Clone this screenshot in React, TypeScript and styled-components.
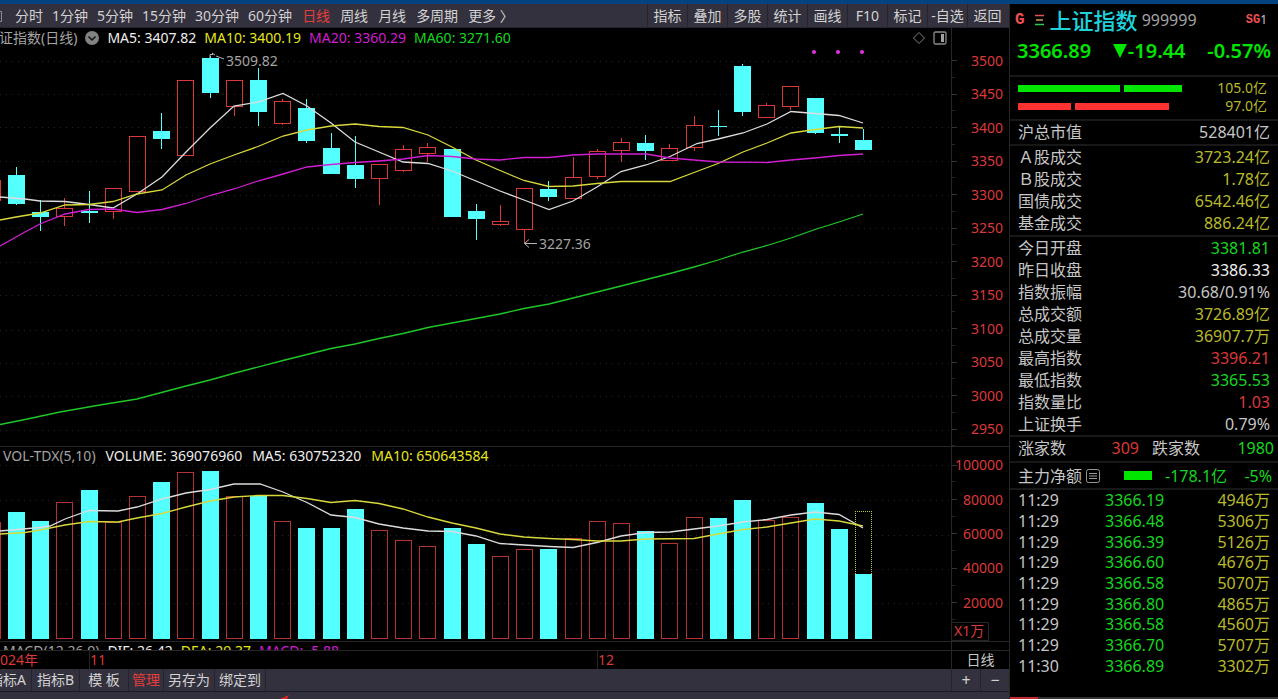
import React from "react";
import styled, { createGlobalStyle } from "styled-components";

const color = {
  text: "#c6c6c6",
  white: "#eeeeee",
  dim: "#a4a4a4",
  red: "#dc3838",
  green: "#14d71e",
  bright: "#00e600",
  yellow: "#b9b92a",
  lineYellow: "#e6e61e",
  magenta: "#d21ed2",
  cyan: "#54ffff",
  bar: "#33313d",
  barLine: "#25242e",
  rule: "#262626",
};

const GlobalStyle = createGlobalStyle`
  * { box-sizing: border-box; }
  body {
    margin: 0;
    background: #000;
    color: ${color.text};
    font: 14px/20px "Noto Sans", "Noto Sans CJK SC", sans-serif;
  }
  button { font: inherit; }
`;

const Page = styled.div`
  min-height: 100vh;
  border-top: 4px solid #04417f;
  display: grid;
  grid-template-columns: minmax(0, 1fr) 269px;
  background: #000;
  overflow: hidden;
`;

const Main = styled.main`
  display: flex;
  flex-direction: column;
  min-width: 0;
  overflow: hidden;
`;

const Toolbar = styled.nav`
  height: 24px;
  flex: none;
  display: flex;
  align-items: stretch;
  background: ${color.bar};
  border-bottom: 1px solid ${color.barLine};
  white-space: nowrap;
`;

const PeriodGroup = styled.div<{ $gap: number; $lead: number }>`
  display: flex;
  gap: ${(p) => p.$gap}px;
  padding-left: ${(p) => p.$lead}px;
`;

const FlatButton = styled.button<{ $color?: string }>`
  padding: 0;
  border: 0;
  background: none;
  color: ${(p) => p.$color ?? "#d2d2d2"};
  line-height: 24px;
  white-space: pre;
  cursor: pointer;
`;

const ToolGroup = styled.div`
  display: flex;
  margin-left: auto;
  padding-right: 2px;
`;

const ToolCell = styled(FlatButton)`
  width: 40px;
  border-left: 1px solid ${color.barLine};
`;

const LeftEdge = styled.svg`
  display: block;
  flex: none;
`;

const Panel = styled.section<{ $height: number }>`
  display: grid;
  grid-template-columns: minmax(0, 1fr) 58px;
  height: ${(p) => p.$height}px;
  border-bottom: 1px solid ${color.rule};
`;

const Plot = styled.div`
  display: flex;
  flex-direction: column;
  min-width: 0;
  overflow: hidden;
`;

const Legend = styled.header<{ $lead?: number; $height?: number; $gap?: number }>`
  height: ${(p) => p.$height ?? 18}px;
  flex: none;
  display: flex;
  align-items: center;
  gap: ${(p) => p.$gap ?? 8}px;
  margin-left: ${(p) => p.$lead ?? 3}px;
  white-space: nowrap;
`;

const Tint = styled.span<{ $color: string }>`
  color: ${(p) => p.$color};
`;

const LegendTools = styled.div`
  display: flex;
  gap: 7px;
  margin-left: auto;
  padding-right: 4px;
`;

const IconButton = styled.button`
  display: block;
  padding: 0;
  border: 0;
  background: none;
  line-height: 0;
  cursor: pointer;
`;

const Drawing = styled.svg`
  display: block;
  width: 100%;
  flex: none;
`;

const Axis = styled.aside`
  display: flex;
  flex-direction: column;
  border-left: 1px solid ${color.rule};
  color: ${color.red};
  overflow: hidden;
`;

const AxisLabels = styled.ol<{ $height: number; $top: number }>`
  list-style: none;
  margin: ${(p) => p.$top}px 0 0;
  padding: 0;
  height: ${(p) => p.$height}px;
  flex: none;
  display: grid;
  grid-auto-rows: 1fr;
  text-align: right;
`;

const AxisLabel = styled.li`
  display: flex;
  align-items: center;
  justify-content: flex-end;
  padding-right: 6px;
  background:
    linear-gradient(#333, #333) left center / 5px 1px no-repeat,
    linear-gradient(${color.rule}, ${color.rule}) left bottom / 3px 1px no-repeat;
`;

const Unit = styled.span`
  align-self: flex-start;
  width: 37px;
  height: 20px;
  margin-top: 2px;
  padding-left: 2px;
  border: 1px solid ${color.rule};
  border-left: 0;
  line-height: 16px;
`;

const MacdStrip = styled(Panel)`
  overflow: hidden;
`;

const DateRow = styled.div`
  display: grid;
  grid-template-columns: 89px 508px minmax(0, 1fr) 58px;
  height: 18px;
  line-height: 17px;
  color: ${color.red};
  overflow: hidden;
`;

const DateMark = styled.span<{ $first?: boolean }>`
  display: flex;
  justify-content: ${(p) => (p.$first ? "flex-end" : "flex-start")};
  padding-right: ${(p) => (p.$first ? 51 : 0)}px;
  border-left: ${(p) => (p.$first ? 0 : 1)}px solid ${color.rule};
  white-space: nowrap;
`;

const DateUnit = styled.span`
  border-left: 1px solid ${color.rule};
  color: ${color.text};
  text-align: center;
`;

const BottomBar = styled.nav`
  display: flex;
  height: 22px;
  flex: none;
  background: ${color.bar};
`;

const BottomCell = styled(FlatButton)<{ $width: number; $end?: boolean }>`
  width: ${(p) => p.$width}px;
  flex: none;
  display: flex;
  justify-content: ${(p) => (p.$end ? "flex-end" : "center")};
  padding-right: ${(p) => (p.$end ? 5 : 0)}px;
  border-right: 1px solid ${color.barLine};
  line-height: 22px;
`;

const ZoomCells = styled.div`
  display: flex;
  margin-left: auto;
`;

const ZoomCell = styled(FlatButton)`
  width: 29px;
  border-left: 1px solid ${color.barLine};
  font-size: 16px;
  line-height: 20px;
`;

const StatusBar = styled.div`
  flex: 1;
  min-height: 8px;
  border-top: 1px solid #1c1b24;
  background: ${color.bar};
`;

const Sidebar = styled.aside`
  display: flex;
  flex-direction: column;
  min-width: 0;
  border-left: 1px solid ${color.rule};
  font-size: 16px;
  white-space: nowrap;
`;

const Head = styled.header`
  display: flex;
  align-items: center;
  height: 31px;
  padding: 0 11px 0 5px;
`;

const Flag = styled.span<{ $size: number }>`
  font: bold ${(p) => p.$size}px/20px "Liberation Mono", monospace;
  color: #f05050;
`;

const IndexName = styled.h1`
  margin: 0 4px 0 3px;
  font-size: 22px;
  line-height: 30px;
  font-weight: 500;
  color: #1ed2dc;
`;

const FlagGroup = styled.span`
  display: flex;
  align-items: center;
  margin-left: auto;
  font-size: 12px;
`;

const Quote = styled.div`
  display: flex;
  justify-content: space-between;
  height: 40px;
  padding: 0 7px;
  color: ${color.bright};
  font-size: 20px;
  line-height: 32px;
  font-weight: 600;
`;

const Change = styled.span`
  display: flex;
  align-items: center;
  gap: 1px;
  height: 32px;
`;

const Block = styled.section<{ $pad?: string }>`
  border-top: 2px solid #181818;
  padding: ${(p) => p.$pad ?? "0 8px"};
`;

const Force = styled.div`
  display: flex;
  align-items: center;
  gap: 4px;
  height: 18px;
  padding-right: 3px;
  font-size: 14px;
  line-height: 18px;
  color: ${color.yellow};
`;

const Segment = styled.i<{ $color: string; $width: number }>`
  width: ${(p) => p.$width}px;
  height: 7px;
  background: ${(p) => p.$color};
`;

const Amount = styled.span`
  margin-left: auto;
`;

const Facts = styled.table<{ $row: number }>`
  width: 100%;
  border-collapse: collapse;
  line-height: ${(p) => p.$row}px;
  th, td {
    height: ${(p) => p.$row}px;
    padding: 0;
    font-weight: 400;
    text-align: left;
  }
  td:last-child { text-align: right; }
`;

const Breadth = styled.div`
  display: grid;
  grid-template-columns: 65px 56px 65px minmax(0, 1fr);
  height: 24px;
  line-height: 22px;
`;

const Right = styled.span<{ $color: string }>`
  color: ${(p) => p.$color};
  text-align: right;
`;

const Label = styled.span<{ $indent?: boolean }>`
  padding-left: ${(p) => (p.$indent ? 13 : 0)}px;
`;

const NetFlow = styled.div`
  display: flex;
  align-items: center;
  height: 25px;
  line-height: 24px;
  color: ${color.green};
`;

const FlowLabel = styled.span`
  color: ${color.text};
  margin-right: 4px;
`;

const FlowBar = styled.i`
  width: 28px;
  height: 9px;
  margin: 0 13px 0 24px;
  background: ${color.bright};
`;

const SideFoot = styled.div`
  height: 2px;
  margin-top: auto;
  background: linear-gradient(90deg, #c82828 28px, #333 28px);
`;

const minutePeriods = ["分时", "1分钟", "5分钟", "15分钟", "30分钟", "60分钟"];
const longPeriods = ["日线", "周线", "月线", "多周期", "更多 〉"];
const tools = ["指标", "叠加", "多股", "统计", "画线", "F10", "标记", "-自选", "返回"];

const priceTicks = [3500, 3450, 3400, 3350, 3300, 3250, 3200, 3150, 3100, 3050, 3000, 2950];
const volumeTicks = [100000, 80000, 60000, 40000, 20000];

const STEP = 24.2;
const center = (i: number) => Math.round(16.5 + STEP * i - 0.5) + 0.5;

// [rising, high, body top, body bottom, low, volume top]
type Bar = [boolean, number, number, number, number, number];
const bars: Bar[] = [
  [true, 180, 180, 200, 200, 522],
  [false, 167, 175, 204, 205, 512],
  [false, 200, 212, 217, 231, 521],
  [true, 198, 208, 216, 226, 502],
  [false, 191, 211, 213, 223, 490],
  [true, 188, 188, 211, 219, 522],
  [true, 136, 136, 191, 191, 496],
  [false, 113, 131, 139, 149, 482],
  [true, 80, 80, 155, 155, 472],
  [false, 56, 58, 93, 98, 471],
  [true, 80, 80, 106, 116, 496],
  [false, 68, 80, 112, 126, 496],
  [true, 99, 101, 123, 125, 521],
  [false, 99, 108, 141, 143, 528],
  [false, 133, 148, 174, 174, 528],
  [false, 136, 165, 179, 188, 509],
  [true, 164, 164, 178, 205, 530],
  [true, 145, 149, 170, 172, 540],
  [true, 143, 147, 153, 162, 546],
  [false, 149, 149, 217, 217, 528],
  [false, 204, 211, 219, 240, 544],
  [true, 205, 221, 224, 226, 556],
  [true, 188, 188, 229, 243, 549],
  [false, 181, 189, 197, 201, 549],
  [true, 157, 177, 198, 198, 538],
  [true, 149, 151, 176, 179, 521],
  [true, 138, 142, 150, 162, 523],
  [false, 135, 143, 151, 160, 531],
  [true, 144, 148, 160, 160, 543],
  [true, 116, 125, 147, 151, 517],
  [false, 110, 126, 127, 136, 518],
  [false, 64, 66, 112, 116, 500],
  [true, 103, 105, 117, 117, 520],
  [true, 86, 86, 106, 110, 517],
  [false, 98, 98, 133, 134, 503],
  [false, 126, 134, 136, 143, 529],
  [false, 129, 140, 150, 150, 574],
];

const ma5 = "0,197 25,199 40,201 65,201.5 89,204.5 113,208 137,194 162,177 186,152 210,128 234,106 258,102 283,93.5 307,106 331,123 355,142 379,152 403,162 428,163.5 452,171 476,181 500,191 524,200 549,209.5 573,201 597,187 621,171.5 646,165 670,156.5 697,143.5 718,139 743,133 767,124 791,111.5 815,113.5 839,115.5 863,123";
const ma10 = "0,220 16,217 40,213 65,205 89,204.5 113,201.5 137,194 162,190 186,175 210,164 234,155 258,146.5 283,136 307,130 331,126 355,124 379,126.5 403,127.5 428,135 452,147 476,160 500,170.5 524,180.5 549,186.5 573,186 597,183.5 621,181.5 670,181.5 694,172.5 718,163.5 743,152 767,143 791,133 815,129.5 839,126.5 863,128";
const ma20 = "0,246 25,232 40,224 65,214 89,209.5 113,209 137,212.5 162,209.5 186,203.5 210,195.5 234,189 258,181 283,174 307,167 331,164.5 355,162.5 379,161 403,159 428,155.5 452,156.5 476,159 500,160 524,157.5 549,157.5 573,155 597,154 646,154 670,158 694,160 718,162 767,162.5 791,160 815,158 839,155.5 863,154";
const ma60 = "0,424.5 25,419.5 60,412 100,405 137,399 186,386 210,380 235,373 283,360.5 331,348.5 355,344 379,338.5 403,333.5 428,327.5 476,318.5 500,314 524,308.5 549,304 597,292 621,286 670,273.5 694,267 718,260 743,252 767,245.5 791,238 815,229.5 839,222 863,214";
const vma5 = "0,531 40,527.5 50,526 65,519 89,510.5 118,511 137,507 162,499 186,493 210,489.5 234,484 260,484 283,492 307,502.5 331,515 355,517.5 379,524 403,528 428,531 452,531.5 476,536 500,543.5 524,545 549,546.5 573,547.5 597,542.5 621,536 646,532.5 670,532 694,529 718,526 743,522 767,519.5 791,515 815,512 839,514.5 863,528";
const vma10 = "0,534 25,532.5 40,530 65,525 89,521.5 118,522 137,518 162,513.5 186,507 210,501 234,497 258,495.5 283,495.5 307,498.5 331,502.5 355,500.5 379,503.5 403,509 428,517 452,523 476,528 500,534 524,537 549,538.5 573,539.5 597,541 621,541 646,539 694,538.5 718,534 743,529.5 767,527 791,523 815,519 839,521 863,526";

const Grid = ({ ys }: { ys: number[] }) => (
  <g stroke="#262626" strokeDasharray="1 5" shapeRendering="crispEdges">
    {ys.map((y) => (
      <line key={y} x1="0" x2="951" y1={y + 0.5} y2={y + 0.5} />
    ))}
  </g>
);

const Line = ({ points, stroke }: { points: string; stroke: string }) => (
  <polyline points={points} fill="none" stroke={stroke} strokeWidth="1.3" />
);

const Candle = ({ bar, index }: { bar: Bar; index: number }) => {
  const [up, high, top, bottom, low] = bar;
  const x = center(index);
  const stroke = up ? color.red : color.cyan;
  return (
    <g stroke={stroke} shapeRendering="crispEdges">
      {high < top && <line x1={x} x2={x} y1={high} y2={top} />}
      {low > bottom && <line x1={x} x2={x} y1={bottom} y2={low} />}
      {up ? (
        <rect x={x - 8} y={top + 0.5} width="16" height={bottom - top} fill="none" />
      ) : (
        <rect x={x - 8.5} y={top} width="17" height={bottom - top} fill={color.cyan} stroke="none" />
      )}
    </g>
  );
};

const VolumeBar = ({ bar, index }: { bar: Bar; index: number }) => {
  const [up, , , , , top] = bar;
  const x = center(index);
  return up ? (
    <rect x={x - 8} y={top + 0.5} width="16" height={638 - top} fill="none" stroke="#b43232" shapeRendering="crispEdges" />
  ) : (
    <rect x={x - 8.5} y={top} width="17" height={639 - top} fill={color.cyan} shapeRendering="crispEdges" />
  );
};

const PriceChart = () => (
  <Drawing height="398" viewBox="0 48 951 398" preserveAspectRatio="xMaxYMin meet" role="img" aria-label="日线">
    <Grid ys={[61, 94, 127, 161, 195, 228, 262, 295, 330, 363, 396, 430]} />
    {bars.map((bar, i) => (
      <Candle key={i} bar={bar} index={i - 1} />
    ))}
    <Line points={ma5} stroke="#dcdcdc" />
    <Line points={ma10} stroke="#d8d83c" />
    <Line points={ma20} stroke={color.magenta} />
    <Line points={ma60} stroke="#1ec828" />
    <path d="M210 58V54.5H213M212 53l3 2M216 56l8 3" stroke="#b4b4b4" fill="none" />
    <path d="M524 243.5H537M529 239.500l-4.500 4 4.500 4" stroke="#b4b4b4" fill="none" />
    <g fill={color.dim} fontSize="14">
      <text x="226" y="66">3509.82</text>
      <text x="539" y="249">3227.36</text>
    </g>
    <g fill="#e632e6">
      <circle cx="814" cy="52" r="2" />
      <circle cx="838" cy="52" r="2" />
      <circle cx="862" cy="52" r="2" />
    </g>
  </Drawing>
);

const VolumeChart = () => (
  <Drawing height="176" viewBox="0 465 951 176" preserveAspectRatio="xMaxYMin meet" role="img" aria-label="VOL-TDX">
    <Grid ys={[465, 500, 535, 569, 603]} />
    {bars.map((bar, i) => (
      <VolumeBar key={i} bar={bar} index={i - 1} />
    ))}
    <path d="M855.5 574V511.500H871.5V574" fill="none" stroke="#c8c832" strokeDasharray="1 1" shapeRendering="crispEdges" />
    <Line points={vma5} stroke="#dcdcdc" />
    <Line points={vma10} stroke="#d8d83c" />
  </Drawing>
);

const market: [string, string, string][] = [
  ["Ａ股成交", "3723.24亿", color.yellow],
  ["Ｂ股成交", "1.78亿", color.yellow],
  ["国债成交", "6542.46亿", color.yellow],
  ["基金成交", "886.24亿", color.yellow],
];

const stats: [string, string, string][] = [
  ["今日开盘", "3381.81", color.green],
  ["昨日收盘", "3386.33", color.white],
  ["指数振幅", "30.68/0.91%", color.text],
  ["总成交额", "3726.89亿", color.yellow],
  ["总成交量", "36907.7万", color.yellow],
  ["最高指数", "3396.21", color.red],
  ["最低指数", "3365.53", color.green],
  ["指数量比", "1.03", color.red],
  ["上证换手", "0.79%", color.text],
];

const trades: [string, string, string][] = [
  ["11:29", "3366.19", "4946万"],
  ["11:29", "3366.48", "5306万"],
  ["11:29", "3366.39", "5126万"],
  ["11:29", "3366.60", "4676万"],
  ["11:29", "3366.58", "5070万"],
  ["11:29", "3366.80", "4865万"],
  ["11:29", "3366.58", "4560万"],
  ["11:29", "3366.70", "5707万"],
  ["11:30", "3366.89", "3302万"],
];

const Trades = styled.table`
  width: 100%;
  height: 186px;
  border-collapse: collapse;
  line-height: 20px;
  td { padding: 0; text-align: left; }
  td:first-child { width: 87px; }
  td:nth-child(2) { color: ${color.green}; }
  td:last-child { color: ${color.yellow}; text-align: right; }
`;

const FactRows = ({ rows }: { rows: [string, string, string][] }) => (
  <Facts $row={22}>
    <tbody>
      {rows.map(([name, value, tone]) => (
        <tr key={name}>
          <th scope="row">{name}</th>
          <td>
            <Tint $color={tone}>{value}</Tint>
          </td>
        </tr>
      ))}
    </tbody>
  </Facts>
);

export default function App() {
  return (
    <>
      <GlobalStyle />
      <Page>
        <Main>
          <Toolbar>
            <LeftEdge width="4" height="24" viewBox="0 0 4 24">
              <path d="M0 7.500H1.500V17.500H0" fill="none" stroke="#8c8c96" />
            </LeftEdge>
            <PeriodGroup $gap={9} $lead={11}>
              {minutePeriods.map((name) => (
                <FlatButton key={name}>{name}</FlatButton>
              ))}
            </PeriodGroup>
            <PeriodGroup $gap={10} $lead={10}>
              {longPeriods.map((name) => (
                <FlatButton key={name} $color={name === "日线" ? "#e63c3c" : undefined}>
                  {name}
                </FlatButton>
              ))}
            </PeriodGroup>
            <ToolGroup>
              {tools.map((name) => (
                <ToolCell key={name}>{name}</ToolCell>
              ))}
            </ToolGroup>
          </Toolbar>

          <Panel $height={419}>
            <Plot>
              <Legend $lead={-1} $height={20}>
                <Tint $color={color.dim}>证指数(日线)</Tint>
                <IconButton aria-label="展开">
                  <svg width="14" height="14" viewBox="0 0 14 14">
                    <circle cx="7" cy="7" r="7" fill="#828282" />
                    <path d="M3.500 5.500 7 9l3.500-3.500" fill="none" stroke="#111" strokeWidth="1.500" />
                  </svg>
                </IconButton>
                <Tint $color={color.white}>MA5: 3407.82</Tint>
                <Tint $color={color.lineYellow}>MA10: 3400.19</Tint>
                <Tint $color={color.magenta}>MA20: 3360.29</Tint>
                <Tint $color={color.green}>MA60: 3271.60</Tint>
                <LegendTools>
                  <IconButton aria-label="标记">
                    <svg width="14" height="14" viewBox="0 0 14 14">
                      <path d="M7 1.500 12.500 7 7 12.500 1.500 7Z" fill="none" stroke="#828282" />
                    </svg>
                  </IconButton>
                  <IconButton aria-label="侧栏">
                    <svg width="14" height="14" viewBox="0 0 14 14">
                      <rect x="1" y="1" width="12" height="12" rx="1.500" fill="none" stroke="#8c8c8c" strokeWidth="1.300" />
                      <rect x="8" y="3" width="3" height="8" fill="#a0a0a0" />
                    </svg>
                  </IconButton>
                </LegendTools>
              </Legend>
              <PriceChart />
            </Plot>
            <Axis>
              <AxisLabels $top={16} $height={402}>
                {priceTicks.map((tick) => (
                  <AxisLabel key={tick}>{tick}</AxisLabel>
                ))}
              </AxisLabels>
            </Axis>
          </Panel>

          <Panel $height={195}>
            <Plot>
              <Legend $gap={10}>
                <Tint $color={color.dim}>VOL-TDX(5,10)</Tint>
                <Tint $color={color.white}>VOLUME: 369076960</Tint>
                <Tint $color={color.white}>MA5: 630752320</Tint>
                <Tint $color={color.lineYellow}>MA10: 650643584</Tint>
              </Legend>
              <VolumeChart />
            </Plot>
            <Axis>
              <AxisLabels $top={1} $height={172}>
                {volumeTicks.map((tick) => (
                  <AxisLabel key={tick}>{tick}</AxisLabel>
                ))}
              </AxisLabels>
              <Unit>X1万</Unit>
            </Axis>
          </Panel>

          <MacdStrip $height={9}>
            <Plot>
              <Legend>
                <Tint $color={color.dim}>MACD(12,26,9)</Tint>
                <Tint $color={color.white}>DIF: 26.42</Tint>
                <Tint $color={color.lineYellow}>DEA: 29.37</Tint>
                <Tint $color={color.magenta}>MACD: -5.88</Tint>
              </Legend>
            </Plot>
            <Axis />
          </MacdStrip>

          <DateRow>
            <DateMark $first>2024年</DateMark>
            <DateMark>11</DateMark>
            <DateMark>12</DateMark>
            <DateUnit>日线</DateUnit>
          </DateRow>

          <BottomBar>
            <BottomCell $width={32} $end>指标A</BottomCell>
            <BottomCell $width={48}>指标B</BottomCell>
            <BottomCell $width={49}>模 板</BottomCell>
            <BottomCell $width={35} $color="#e63c3c">管理</BottomCell>
            <BottomCell $width={51}>另存为</BottomCell>
            <BottomCell $width={51}>绑定到</BottomCell>
            <ZoomCells>
              <ZoomCell aria-label="放大">+</ZoomCell>
              <ZoomCell aria-label="缩小">−</ZoomCell>
            </ZoomCells>
          </BottomBar>
          <StatusBar>
            <svg width="300" height="7" viewBox="0 0 300 7" display="block">
              <path d="M280 7 289 3 287 7Z" fill="#e62020" />
            </svg>
          </StatusBar>
        </Main>

        <Sidebar>
          <Head>
            <Flag $size={16}>G</Flag>
            <svg width="22" height="14" viewBox="0 0 22 14">
              <path d="M10 2.500h9" stroke="#e65050" strokeWidth="1.500" />
              <path d="M11 7h7" stroke="#c8a050" strokeWidth="1.500" />
              <path d="M10 11.500h9" stroke="#32c850" strokeWidth="1.500" />
            </svg>
            <IndexName>上证指数</IndexName>
            <Tint $color={color.dim}>999999</Tint>
            <FlagGroup>
              <Flag $size={12}>SG</Flag>1
            </FlagGroup>
          </Head>
          <Quote>
            <span>3366.89</span>
            <Change>
              <svg width="14" height="14" viewBox="0 0 14 14">
                <path d="M0 0H14L7 14Z" fill={color.bright} />
              </svg>
              -19.44
            </Change>
            <span>-0.57%</span>
          </Quote>
          <Block $pad="2px 8px 4px">
            <Force>
              <Segment $color={color.bright} $width={102} />
              <Segment $color={color.bright} $width={58} />
              <Amount>105.0亿</Amount>
            </Force>
            <Force>
              <Segment $color="#ff3232" $width={53} />
              <Segment $color="#ff3232" $width={94} />
              <Amount>97.0亿</Amount>
            </Force>
          </Block>
          <Block $pad="0 8px 1px">
            <FactRows rows={[["沪总市值", "528401亿", color.text]]} />
          </Block>
          <Block $pad="0 8px 1px">
            <FactRows rows={market} />
          </Block>
          <Block>
            <FactRows rows={stats} />
          </Block>
          <Block $pad="0 4px 0 8px">
            <Breadth>
              <Label>涨家数</Label>
              <Right $color={color.red}>309</Right>
              <Label $indent>跌家数</Label>
              <Right $color={color.green}>1980</Right>
            </Breadth>
          </Block>
          <Block $pad="0 6px 0 8px">
            <NetFlow>
              <FlowLabel>主力净额</FlowLabel>
              <svg width="14" height="14" viewBox="0 0 14 14">
                <rect x="0.500" y="0.500" width="13" height="13" rx="2" fill="none" stroke="#969696" />
                <path d="M3 4.500h8M3 7h8M3 9.500h8" stroke="#969696" />
              </svg>
              <FlowBar />
              <span>-178.1亿</span>
              <Amount>-5%</Amount>
            </NetFlow>
          </Block>
          <Block>
            <Trades>
              <tbody>
                {trades.map(([time, price, amount], i) => (
                  <tr key={i}>
                    <td>{time}</td>
                    <td>{price}</td>
                    <td>{amount}</td>
                  </tr>
                ))}
              </tbody>
            </Trades>
          </Block>
          <SideFoot />
        </Sidebar>
      </Page>
    </>
  );
}
